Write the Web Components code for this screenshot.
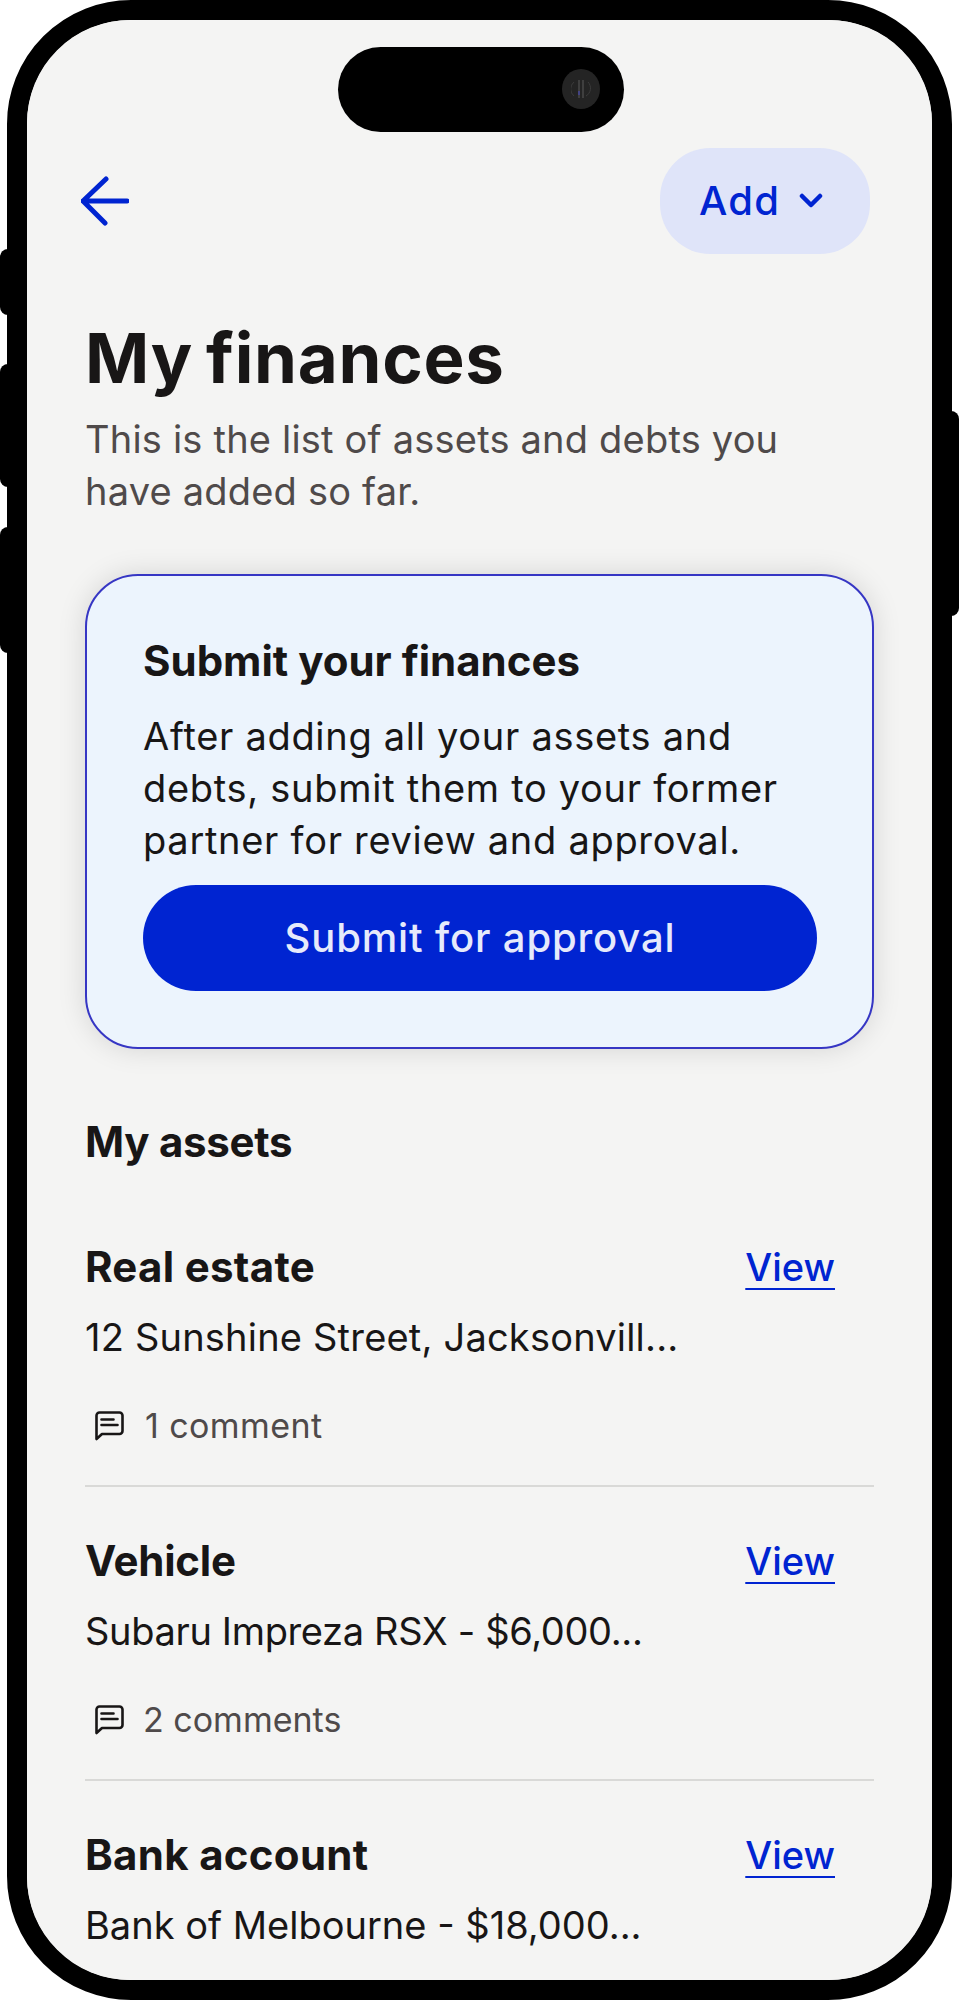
<!DOCTYPE html>
<html lang="en"><head><meta charset="utf-8"><title>My finances</title>
<style>html,body{margin:0;background:#fff}body{font-family:Inter,"Liberation Sans",sans-serif;color:#181616}</style>
</head><body>
<phone-frame>
  <top-bar></top-bar>
  <page-heading heading="My finances">This is the list of assets and debts you have added so far.</page-heading>
  <submit-card heading="Submit your finances" action="Submit for approval">After adding all your assets and debts, submit them to your former partner for review and approval.</submit-card>
  <section-title>My assets</section-title>
  <asset-row style="--hls:.3px;--dls:.2px;--cls:.4px;--cgap:21px" heading="Real estate" detail="12 Sunshine Street, Jacksonvill..." comments="1 comment"></asset-row>
  <asset-row style="--hls:-.25px;--dls:-.35px;--cls:0px;--cgap:19px" heading="Vehicle" detail="Subaru Impreza RSX - $6,000..." comments="2 comments"></asset-row>
  <asset-row style="--hls:.3px;--dls:0px" heading="Bank account" detail="Bank of Melbourne - $18,000..." comments=""></asset-row>
</phone-frame>
<script>
function def(name, html, init){
  customElements.define(name, class extends HTMLElement{
    connectedCallback(){
      if(this.shadowRoot) return;
      const r=this.attachShadow({mode:'open'});
      r.innerHTML=html;
      if(init) init(this,r);
    }
  });
}
const attrText=(el,r,map)=>{for(const k in map){r.querySelector(map[k]).textContent=el.getAttribute(k)||''}};

def('phone-frame',`<style>
:host{display:block;position:relative;box-sizing:border-box;width:945px;height:2000px;margin-left:7px;border:20px solid #000;border-radius:124px;background:#f4f4f3}
.screen{box-sizing:border-box;height:1960px;border-radius:103px;overflow:hidden;padding:128px 58px 0 58px;background:#f4f4f3}
.island{position:absolute;left:311px;top:27px;width:286px;height:85px;border-radius:43px;background:#000}
.lens{position:absolute;right:24px;top:22px;width:38px;height:40px;border-radius:50%;background:#242424}
.lens svg{display:block;position:absolute;left:9px;top:9px}
.btn{position:absolute;background:#000}
.b1{left:-27px;top:229px;width:27px;height:66px;border-radius:8px 0 0 8px}
.b2{left:-27px;top:344px;width:27px;height:123px;border-radius:8px 0 0 8px}
.b3{left:-27px;top:507px;width:27px;height:126px;border-radius:8px 0 0 8px}
.b4{right:-27px;top:391px;width:27px;height:205px;border-radius:0 8px 8px 0}
</style>
<div class="screen"><slot></slot></div>
<div class="island"><div class="lens"><svg width="20" height="22" viewBox="0 0 20 22" fill="none"><path d="M3 4a9 9 0 0 0 0 14M17 4a9 9 0 0 1-2 14" stroke="#3c3c3c"/><path d="M8 2v18M12 2v18" stroke="#5a5a5a"/><path d="M8 13v4" stroke="#4848c8"/></svg></div></div>
<i class="btn b1"></i><i class="btn b2"></i><i class="btn b3"></i><i class="btn b4"></i>`);

def('top-bar',`<style>
:host{display:flex;justify-content:space-between;align-items:center;height:106px;margin-left:-4px;margin-right:4px}
svg{display:block}
.add{display:flex;align-items:center;gap:19px;box-sizing:border-box;width:210px;height:106px;padding-left:39px;border-radius:50px;background:#dfe4f9;color:#0024d1;font:500 40px/52px Inter,sans-serif;letter-spacing:1.3px}
</style>
<svg width="48" height="50" viewBox="0 0 48 50" fill="none" stroke="#0024d1" stroke-width="5" stroke-linecap="round" stroke-linejoin="round"><path d="M25 3 2 25l22 22M2 25h44"/></svg>
<div class="add"><span>Add</span><svg width="24" height="16" viewBox="0 0 24 16" fill="none" stroke="#0024d1" stroke-width="4.5" stroke-linecap="round" stroke-linejoin="round"><path d="M3 3l9 9 9-9"/></svg></div>`);

def('page-heading',`<style>
:host{display:block;margin-top:68px}
h1{margin:0;font:700 69px/72px Inter,sans-serif;letter-spacing:.7px;word-spacing:-4px;color:#181616}
p{margin:19px 0 0;max-width:725px;font:400 38px/52px Inter,sans-serif;letter-spacing:.2px;color:#4f4a4a}
</style><h1></h1><p><slot></slot></p>`,(el,r)=>attrText(el,r,{heading:'h1'}));

def('submit-card',`<style>
:host{display:block;box-sizing:border-box;margin-top:57px;height:475px;padding:59px 55px 55px 56px;border:2px solid #3636c4;border-radius:53px;background:#ecf4fd;box-shadow:0 0 28px rgba(0,0,0,.13)}
h2{margin:0;font:700 42px/52px Inter,sans-serif;letter-spacing:0;color:#181616}
p{margin:23px 0 0;font:400 38px/52px Inter,sans-serif;letter-spacing:.7px;color:#181616}
.go{display:flex;align-items:center;justify-content:center;height:106px;margin-top:19px;border-radius:53px;background:#0024d1;color:#e6eafb;font:500 40px/52px Inter,sans-serif;letter-spacing:.85px}
</style><h2></h2><p><slot></slot></p><div class="go"></div>`,(el,r)=>attrText(el,r,{heading:'h2',action:'.go'}));

def('section-title',`<style>
:host{display:block;margin-top:67px;font:700 42px/52px Inter,sans-serif;letter-spacing:-.3px;color:#181616}
</style><slot></slot>`);

def('asset-row',`<style>
:host{display:block;margin-top:73px;padding-bottom:33px;border-bottom:2px solid #d9d9d7}
:host(:last-child){border-bottom:0}
:host(:not(:first-of-type)){margin-top:48px}
.top{display:flex;justify-content:space-between;align-items:center;padding-right:39px}
h3{margin:0;font:700 42px/52px Inter,sans-serif;letter-spacing:var(--hls,0);color:#181616}
a{font:500 38px/52px Inter,sans-serif;letter-spacing:0;color:#0024d1;text-decoration:underline;text-underline-offset:7px;text-decoration-thickness:2px}
.detail{margin-top:18px;font:400 38px/52px Inter,sans-serif;letter-spacing:var(--dls,0);color:#181616}
.c{display:flex;align-items:center;gap:var(--cgap,20px);margin-top:37px;padding-left:10px;font:400 34px/52px Inter,sans-serif;letter-spacing:var(--cls,0);color:#4f4a4a}
</style>
<div class="top"><h3></h3><a href="#">View</a></div>
<div class="detail"></div>
<div class="c"><svg width="29" height="30" viewBox="0 0 29 30" fill="none" stroke="#181616" stroke-width="2.6" stroke-linejoin="round" stroke-linecap="round"><path d="M1.5 28V4.5a3 3 0 0 1 3-3h20a3 3 0 0 1 3 3v15.5a3 3 0 0 1-3 3H7z"/><path d="M6.5 8.5h12M6.5 14h16" /></svg><span></span></div>`,(el,r)=>{
  attrText(el,r,{heading:'h3',detail:'.detail',comments:'.c span'});
  if(!el.getAttribute('comments')) r.querySelector('.c').style.display='none';
});
</script>
</body></html>
